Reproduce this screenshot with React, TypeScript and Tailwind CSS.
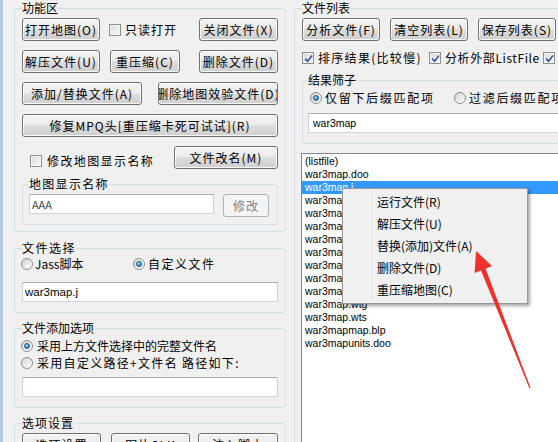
import React from 'react';

type BtnProps = {
  label: string;
  className?: string;
  disabled?: boolean;
};

function WinButton({ label, className = '', disabled }: BtnProps) {
  return (
    <div
      className={`flex h-[23px] shrink-0 items-center justify-center overflow-hidden whitespace-nowrap rounded-[3px] border text-[12px] leading-none tracking-[1px] ${
        disabled
          ? 'border-[#adb2b5] bg-[#f4f4f4] text-[#838383]'
          : 'border-[#707070] bg-[linear-gradient(#f2f2f2,#ebebeb_50%,#dddddd_50%,#cfcfcf)] text-black shadow-[inset_0_0_0_1px_#fcfcfc]'
      } ${className}`}
    >
      {label}
    </div>
  );
}

function CheckBox({ checked }: { checked?: boolean }) {
  return (
    <span className="flex h-[12px] w-[12px] shrink-0 items-center justify-center border border-[#8e8f8f] bg-[linear-gradient(135deg,#d8d8d8,#fbfbfb)] shadow-[inset_0_0_0_1px_#f4f4f4]">
      {checked && (
        <svg width="9" height="9" viewBox="0 0 9 9">
          <path d="M1.2 4.6 L3.6 7.2 L8 1.4" fill="none" stroke="#3a55a6" strokeWidth="1.7" />
        </svg>
      )}
    </span>
  );
}

function Radio({ checked }: { checked?: boolean }) {
  return (
    <span className="flex h-[12px] w-[12px] shrink-0 items-center justify-center rounded-full border border-[#8e8f8f] bg-[linear-gradient(135deg,#d3d3d3,#ffffff)]">
      {checked && (
        <span className="h-[6px] w-[6px] rounded-full border border-[#1d5a91] bg-[radial-gradient(circle_at_35%_35%,#b5e6ff,#2c8fd9_60%,#0e4d8a)]" />
      )}
    </span>
  );
}

type GroupProps = {
  title: string;
  className?: string;
  legendClass?: string;
  children: React.ReactNode;
};

function Group({ title, className = '', legendClass = '', children }: GroupProps) {
  return (
    <fieldset className={`min-w-0 rounded-[3px] border border-[#d5dfe5] ${className}`}>
      <legend className={`text-[12px] leading-[16px] ${legendClass}`}>{title}</legend>
      {children}
    </fieldset>
  );
}

function TextBox({ value, className = '' }: { value?: string; className?: string }) {
  return (
    <div
      className={`h-[20px] overflow-hidden whitespace-nowrap border border-[#cfd3da] border-t-[#abadb3] bg-white pl-[2px] leading-[18px] ${className}`}
    >
      {value}
    </div>
  );
}

const files = [
  '(listfile)',
  'war3map.doo',
  'war3map.j',
  'war3map.mmp',
  'war3map.shd',
  'war3map.w3c',
  'war3map.w3e',
  'war3map.w3i',
  'war3map.w3r',
  'war3map.wct',
  'war3map.wpm',
  'war3map.wtg',
  'war3map.wts',
  'war3mapmap.blp',
  'war3mapunits.doo',
];

const menuItems = ['运行文件(R)', '解压文件(U)', '替换(添加)文件(A)', '删除文件(D)', '重压缩地图(C)'];

export default function App() {
  return (
    <div className="relative flex h-[442px] w-[558px] overflow-hidden bg-[#f0f0f0] font-['Noto_Sans_CJK_SC',sans-serif] text-black">
      <div className="w-[3px] shrink-0 bg-[#b3c7df]" />

      {/* left column */}
      <div className="ml-[11px] flex w-[272px] shrink-0 flex-col">
        <Group title="功能区" className="px-[7px] pb-[6px] pt-[2px]">
          <div className="flex flex-col gap-[9px]">
            <div className="flex items-center">
              <WinButton label="打开地图(O)" className="w-[78px]" />
              <div className="ml-[9px] flex items-center">
                <CheckBox />
                <span className="ml-[4px] text-[12px] tracking-[1px]">只读打开</span>
              </div>
              <WinButton label="关闭文件(X)" className="ml-auto w-[79px]" />
            </div>
            <div className="flex items-center">
              <WinButton label="解压文件(U)" className="w-[78px]" />
              <WinButton label="重压缩(C)" className="ml-[10px] w-[70px]" />
              <WinButton label="删除文件(D)" className="ml-auto w-[79px]" />
            </div>
            <div className="flex items-center">
              <WinButton label="添加/替换文件(A)" className="w-[120px]" />
              <WinButton label="删除地图效验文件(D)" className="ml-auto w-[120px] tracking-[1.4px]" />
            </div>
            <WinButton label="修复MPQ头[重压缩卡死可试试](R)" className="w-full" />
            <div className="flex items-start">
              <div className="ml-[8px] mt-[7px] flex h-[16px] items-center">
                <CheckBox />
                <span className="ml-[5px] text-[12px] tracking-[1.4px]">修改地图显示名称</span>
              </div>
              <WinButton label="文件改名(M)" className="ml-auto w-[104px]" />
            </div>
          </div>
          <Group title="地图显示名称" legendClass="tracking-[1.3px]" className="mt-[7px] px-[6px] pb-[7px] pt-[2px]">
            <div className="flex items-start">
              <TextBox value="AAA" className="w-[185px] text-[11px] text-[#444]" />
              <WinButton label="修改" disabled className="ml-[9px] h-[22px] w-[46px]" />
            </div>
          </Group>
        </Group>

        <Group title="文件选择" legendClass="tracking-[1.5px]" className="mt-[8px] px-[7px] pb-[10px]">
          <div className="-ml-px flex h-[16px] items-center text-[12px]">
            <div className="flex w-[112px] items-center">
              <Radio />
              <span className="ml-[2px]">Jass脚本</span>
            </div>
            <Radio checked />
            <span className="ml-[3px] tracking-[1.5px]">自定义文件</span>
          </div>
          <TextBox value="war3map.j" className="mt-[10px] font-['Liberation_Sans',sans-serif] text-[11.5px]" />
        </Group>

        <Group title="文件添加选项" className="mt-[7px] px-[7px] pb-[10px] pt-[1px]">
          <div className="-ml-px flex h-[17px] items-center text-[12px]">
            <Radio checked />
            <span className="ml-[4px]">采用上方文件选择中的完整文件名</span>
          </div>
          <div className="-ml-px flex h-[17px] items-center text-[12px]">
            <Radio />
            <span className="ml-[4px] whitespace-nowrap tracking-[1.3px]">采用自定义路径+文件名 路径如下:</span>
          </div>
          <TextBox className="mt-[6px]" />
        </Group>

        <Group title="选项设置" legendClass="tracking-[1px]" className="mt-[7px] px-[7px] pt-[2px]">
          <div className="flex">
            <WinButton label="选项设置" className="w-[79px]" />
            <WinButton label="图片SLK" className="ml-[10px] w-[79px]" />
            <WinButton label="注入脚本" className="ml-auto w-[80px]" />
          </div>
        </Group>
      </div>

      {/* right column */}
      <div className="ml-[8px] w-[300px] shrink-0">
        <Group title="文件列表" className="px-[7px] pt-[2px]">
          <div className="flex gap-[10px]">
            <WinButton label="分析文件(F)" className="w-[78px]" />
            <WinButton label="清空列表(L)" className="w-[78px]" />
            <WinButton label="保存列表(S)" className="w-[78px]" />
          </div>
          <div className="mt-[9px] flex h-[16px] items-center whitespace-nowrap text-[12px]">
            <CheckBox checked />
            <span className="ml-[4px] w-[111px] tracking-[1.3px]">排序结果(比较慢)</span>
            <CheckBox checked />
            <span className="ml-[4px] w-[98px] tracking-[0.6px]">分析外部ListFile</span>
            <CheckBox checked />
          </div>
          <Group title="结果筛子" className="mt-[6px] px-[5px] pb-[10px] pt-[2px]">
            <div className="ml-[2px] flex h-[16px] items-center whitespace-nowrap text-[12px]">
              <Radio checked />
              <span className="ml-[3px] w-[129px] tracking-[1.7px]">仅留下后缀匹配项</span>
              <Radio />
              <span className="ml-[3px] tracking-[1.7px]">过滤后缀匹配项</span>
            </div>
            <TextBox value="war3map" className="mt-[7px] pl-[4px] font-['Liberation_Sans',sans-serif] text-[10.5px]" />
          </Group>
          <div className="-ml-px mt-[9px] h-[300px] border border-[#828790] bg-white pt-px font-['Liberation_Sans',sans-serif] text-[10.5px]">
            {files.map((f) => (
              <div
                key={f}
                className={`h-[13px] whitespace-nowrap pl-[3px] leading-[13px] ${
                  f === 'war3map.j' ? 'bg-[#3399ff] text-white' : ''
                }`}
              >
                {f}
              </div>
            ))}
          </div>
        </Group>
      </div>

      {/* context menu */}
      <div className="absolute left-[342px] top-[188px] w-[186px] border border-[#979797] bg-[#f0f0f0] p-[2px] shadow-[2px_2px_3px_rgba(0,0,0,0.35)]">
        <div className="absolute bottom-[2px] left-[29px] top-[2px] w-[2px] border-l border-r border-l-[#e2e3e3] border-r-white" />
        {menuItems.map((m) => (
          <div key={m} className="h-[22px] pl-[32px] text-[12px] leading-[22px]">
            {m}
          </div>
        ))}
      </div>

      {/* red arrow */}
      <svg className="pointer-events-none absolute left-0 top-0" width="558" height="442" viewBox="0 0 558 442">
        <polygon
          points="476,251 492,266 485.6,268.7 530.6,388 529.4,388.3 481,270.5 474.6,273"
          fill="#f0302a"
        />
      </svg>
    </div>
  );
}
